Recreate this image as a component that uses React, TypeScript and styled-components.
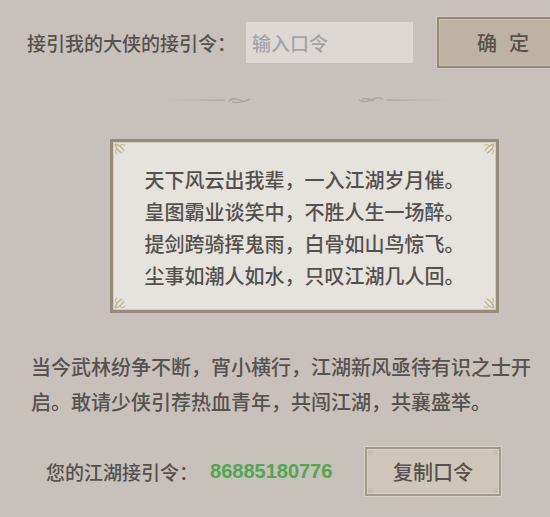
import React from "react";
import styled, { createGlobalStyle } from "styled-components";

const GlobalStyle = createGlobalStyle`
  html, body {
    margin: 0;
    padding: 0;
    background: #c7c0bb;
  }
`;

const Page = styled.div`
  width: 550px;
  height: 517px;
  overflow: hidden;
  background: #c7c0bb;
  color: #55514f;
  font-family: "Noto Sans CJK SC", "Noto Sans", sans-serif;
  font-weight: 500;
`;

const TopRow = styled.div`
  display: flex;
  align-items: center;
  padding: 17px 0 0 27px;
  height: 51px;
`;

const Label = styled.span`
  font-size: 19px;
  line-height: 1;
  white-space: nowrap;
`;

const CodeInput = styled.input`
  box-sizing: border-box;
  width: 167px;
  height: 41px;
  margin-left: 10px;
  padding: 0 6px;
  border: none;
  outline: none;
  background: #ddd8d4;
  font-family: inherit;
  font-weight: 500;
  font-size: 19px;
  color: #55514f;
  &::placeholder {
    color: #a1a4aa;
  }
`;

const FrameButton = styled.button<{ $tone: "dark" | "light" }>`
  position: relative;
  box-sizing: border-box;
  flex: none;
  display: flex;
  align-items: center;
  justify-content: center;
  padding: 0;
  border: 2px solid ${({ $tone }) => ($tone === "dark" ? "#91877a" : "#a39a8d")};
  outline: 1px solid ${({ $tone }) => ($tone === "dark" ? "#d2cbc3" : "#d6d0c9")};
  background: ${({ $tone }) => ($tone === "dark" ? "#beb3a3" : "#cdc6b9")};
  box-shadow: inset 0 0 0 1px rgba(255, 255, 255, 0.18);
  font-family: inherit;
  font-weight: 500;
  font-size: 20px;
  color: #55514f;
  cursor: pointer;
`;

const ConfirmButton = styled(FrameButton)`
  width: 132px;
  height: 51px;
  margin-left: 24px;
  letter-spacing: 12px;
  text-indent: 12px;
`;

const CopyButton = styled(FrameButton)`
  width: 136px;
  height: 49px;
  margin-left: 32px;
`;

const DividerWrap = styled.div`
  margin: 27px 0 0 160px;
  height: 10px;
  display: flex;
`;

const Card = styled.div`
  position: relative;
  box-sizing: border-box;
  width: 389px;
  height: 174px;
  margin: 34px 0 0 110px;
  padding-top: 22px;
  border: 3px solid #978b7b;
  background: #e6e2de;
  box-shadow: inset 0 0 0 1px #d2cbc0;
  text-align: center;
`;

const PoemLine = styled.div`
  font-size: 20px;
  line-height: 32px;
  color: #53504e;
`;

const Corner = styled.svg<{ $pos: "tl" | "tr" | "bl" | "br" }>`
  position: absolute;
  width: 16px;
  height: 16px;
  ${({ $pos }) => ($pos[0] === "t" ? "top: 1px;" : "bottom: 1px;")}
  ${({ $pos }) => ($pos[1] === "l" ? "left: 1px;" : "right: 1px;")}
  transform: scale(${({ $pos }) => ($pos[1] === "l" ? 1 : -1)}, ${({ $pos }) => ($pos[0] === "t" ? 1 : -1)});
`;

const SmallCorner = styled(Corner)`
  width: 8px;
  height: 8px;
`;

const Intro = styled.p`
  margin: 36px 0 0 31px;
  width: 505px;
  font-size: 20px;
  line-height: 35px;
  color: #56524f;
`;

const BottomRow = styled.div`
  display: flex;
  align-items: center;
  margin-top: 28px;
  padding-left: 46px;
  height: 49px;
`;

const InviteCode = styled.span`
  margin-left: 12px;
  font-family: "Liberation Sans", sans-serif;
  font-size: 20px;
  font-weight: 700;
  color: #51a650;
  width: 123px;
`;

const CornerOrnament = ({ pos, small }: { pos: "tl" | "tr" | "bl" | "br"; small?: boolean }) => {
  const C = small ? SmallCorner : Corner;
  return (
    <C $pos={pos} viewBox="0 0 16 16" aria-hidden>
      <path d="M1 1 C5 2 8 4 10 8 M1 1 C2 5 4 8 8 10" stroke="#c2b98f" strokeWidth="1.5" fill="none" />
      <path d="M6 3 C7 1 10 1 11 3 M3 6 C1 7 1 10 3 11" stroke="#c2b98f" strokeWidth="1.2" fill="none" />
    </C>
  );
};

const Divider = () => (
  <DividerWrap>
    <svg width="292" height="10" viewBox="0 0 292 10" aria-hidden>
      <defs>
        <linearGradient id="fadeL" x1="0" x2="1">
          <stop offset="0" stopColor="#aaa29d" stopOpacity="0" />
          <stop offset="1" stopColor="#aaa29d" />
        </linearGradient>
        <linearGradient id="fadeR" x1="1" x2="0">
          <stop offset="0" stopColor="#aaa29d" stopOpacity="0" />
          <stop offset="1" stopColor="#aaa29d" />
        </linearGradient>
      </defs>
      <rect x="0" y="4.5" width="65" height="1.2" fill="url(#fadeL)" />
      <path d="M69 6 C72 3 75 3 79 5 C83 7 86 7 90 4 M72 7 C76 8 80 8 84 6" stroke="#aaa29d" strokeWidth="1.3" fill="none" />
      <path d="M223 4 C219 2 215 3 211 5 C207 7 203 7 199 5 M202 4 C206 3 210 4 214 6" stroke="#aaa29d" strokeWidth="1.3" fill="none" />
      <rect x="227" y="4.5" width="65" height="1.2" fill="url(#fadeR)" />
    </svg>
  </DividerWrap>
);

const poem = [
  "天下风云出我辈，一入江湖岁月催。",
  "皇图霸业谈笑中，不胜人生一场醉。",
  "提剑跨骑挥鬼雨，白骨如山鸟惊飞。",
  "尘事如潮人如水，只叹江湖几人回。",
];

export default function App() {
  return (
    <Page>
      <GlobalStyle />
      <TopRow>
        <Label>接引我的大侠的接引令：</Label>
        <CodeInput placeholder="输入口令" />
        <ConfirmButton $tone="dark">
          <CornerOrnament pos="tl" small />
          <CornerOrnament pos="bl" small />
          确定
        </ConfirmButton>
      </TopRow>
      <Divider />
      <Card>
        <CornerOrnament pos="tl" />
        <CornerOrnament pos="tr" />
        <CornerOrnament pos="bl" />
        <CornerOrnament pos="br" />
        {poem.map((line) => (
          <PoemLine key={line}>{line}</PoemLine>
        ))}
      </Card>
      <Intro>
        当今武林纷争不断，宵小横行，江湖新风亟待有识之士开启。敢请少侠引荐热血青年，共闯江湖，共襄盛举。
      </Intro>
      <BottomRow>
        <Label>您的江湖接引令：</Label>
        <InviteCode>86885180776</InviteCode>
        <CopyButton $tone="light">
          <CornerOrnament pos="tl" small />
          <CornerOrnament pos="tr" small />
          <CornerOrnament pos="bl" small />
          <CornerOrnament pos="br" small />
          复制口令
        </CopyButton>
      </BottomRow>
    </Page>
  );
}
